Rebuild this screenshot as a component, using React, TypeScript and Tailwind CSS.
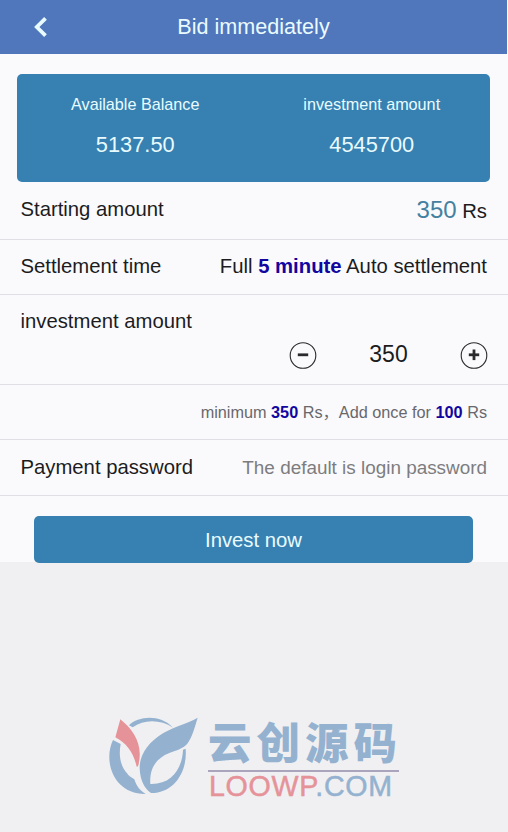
import { useState } from "react";
import type { ReactNode } from "react";

const STEP = 100;
const MINIMUM = 350;

function Header({ title }: { title: string }) {
  return (
    <header className="grid h-[54px] w-[507px] grid-cols-[1fr_auto_1fr] items-center bg-[#5076bb] text-[#e9fbff]">
      <button type="button" aria-label="Back" className="ml-[33px] w-4">
        <svg width="16" height="22" viewBox="0 0 16 22" fill="none">
          <path d="M12.5 2.3L3.8 11l8.7 8.7" stroke="currentColor" strokeWidth="3.8" />
        </svg>
      </button>
      <h1 className="text-[21.6px] leading-[54px]">{title}</h1>
    </header>
  );
}

function Stat({ label, value }: { label: string; value: string }) {
  return (
    <div className="flex flex-1 flex-col items-center">
      <span className="text-[16.2px] leading-5">{label}</span>
      <span className="mt-[17px] text-[21.8px] leading-7">{value}</span>
    </div>
  );
}

function Row({ label, children }: { label: string; children: ReactNode }) {
  return (
    <div className="flex items-center justify-between border-b border-[#e0e0e4] pr-[21px] pb-0.5 pl-[20.5px]">
      <span>{label}</span>
      <div>{children}</div>
    </div>
  );
}

function RoundButton({
  plus,
  onClick,
}: {
  plus?: boolean;
  onClick: () => void;
}) {
  return (
    <button type="button" aria-label={plus ? "Add" : "Subtract"} onClick={onClick}>
      <svg width="28" height="28" viewBox="0 0 28 28" fill="none" stroke="#2a2a2c">
        <circle cx="14" cy="13.500" r="12.8" strokeWidth="1.1" />
        <path d="M8.8 12.8h10.4" strokeWidth="2.8" />
        {plus && <path d="M14 7.500v10.6" strokeWidth="2.8" />}
      </svg>
    </button>
  );
}

function Logo() {
  return (
    <div className="flex pt-[143px] pl-[100px]">
      <svg width="110" height="100" viewBox="0 0 330 300" className="shrink-0">
        <g fill="#94b2d0">
          <path d="M87 61C115 33 180 27 219 68C182 43 132 42 98 67Z" />
          <path d="M39 105C8 170 42 268 137 267C119 257 109 242 103 223C93 216 86 213 81 205C66 188 54 160 62 117Z" />
          <path d="M293 38C270 52 225 64 190 84C144 112 118 150 119 190C120 225 134 252 153 264C212 266 263 212 257 131L249 134C247 190 215 239 151 237C148 190 168 160 208 144C231 135 248 131 262 116C276 98 284 68 293 38Z" />
        </g>
        <path
          d="M61 43C102 76 132 122 114 184L110 185C101 144 80 114 46 97Z"
          fill="#e69299"
        />
      </svg>
      <div className="-ml-[2px] w-[191px] pt-[5px]">
        <div className="h-[60px] font-['Noto_Sans_CJK_SC',sans-serif] text-[43.5px] leading-[62px] font-black tracking-[5px] whitespace-nowrap text-[#94b2d0]">
          云创源码
        </div>
        <div className="h-[2px] bg-[#aaa5bd]" />
        <div className="pl-[1px] text-[28.6px] leading-[29px] tracking-[0.7px] text-[#94b2d0] [-webkit-text-stroke:0.5px]">
          <span className="text-[#e69299]">LOOWP</span>.COM
        </div>
      </div>
    </div>
  );
}

function App() {
  const [amount, setAmount] = useState(MINIMUM);

  return (
    <div className="h-[832px] w-[508px] overflow-hidden bg-[#f0f0f2] font-['Liberation_Sans',Arial,sans-serif] text-[20.3px] text-[#1c1c1f]">
      <div className="h-[562px] bg-[#fafafc]">
        <Header title="Bid immediately" />

        <div className="mx-[17px] mt-5 flex h-[108px] w-[473px] rounded-[5px] bg-[#3681b1] pt-5 text-[#e9fbff]">
          <Stat label="Available Balance" value="5137.50" />
          <Stat label="investment amount" value="4545700" />
        </div>

        <div className="grid grid-rows-[58px_55px]">
          <Row label="Starting amount">
            <span className="text-[24px] text-[#4481a0]">350</span> Rs
          </Row>
          <Row label="Settlement time">
            Full <b className="text-[#1206a0]">5 minute</b> Auto settlement
          </Row>
        </div>

        <div className="h-[90px] border-b border-[#e0e0e4] pt-[11px] pr-5 pl-[20.5px]">
          <div className="leading-[30px]">investment amount</div>
          <div className="ml-auto flex h-10 w-[199px] items-center justify-between">
            <RoundButton onClick={() => setAmount(Math.max(MINIMUM, amount - STEP))} />
            <span className="pb-[3px] text-[23px]">{amount}</span>
            <RoundButton plus onClick={() => setAmount(amount + STEP)} />
          </div>
        </div>

        <div className="flex h-[55px] items-center justify-end border-b border-[#e0e0e4] pr-[21px] text-[16.25px] text-[#68686c]">
          <p>
            minimum <b className="text-[#1206a0]">350</b> Rs
            <span className="font-['Noto_Sans_CJK_SC',sans-serif] leading-none">，</span>
            Add once for <b className="text-[#1206a0]">100</b> Rs
          </p>
        </div>

        <div className="flex h-14 items-center border-b border-[#e0e0e4] pr-[21px] pl-[20.5px]">
          <label htmlFor="password" className="shrink-0">
            Payment password
          </label>
          <input
            id="password"
            type="password"
            placeholder="The default is login password"
            className="w-0 flex-1 pt-px text-right text-[18.9px] outline-none placeholder:text-[#7d7d80]"
          />
        </div>

        <button
          type="button"
          className="mt-5 ml-[34px] h-[47px] w-[439px] rounded-[5px] bg-[#3681b1] pt-0.5 text-[#e9fbff]"
        >
          Invest now
        </button>
      </div>

      <Logo />
    </div>
  );
}

export default App;
